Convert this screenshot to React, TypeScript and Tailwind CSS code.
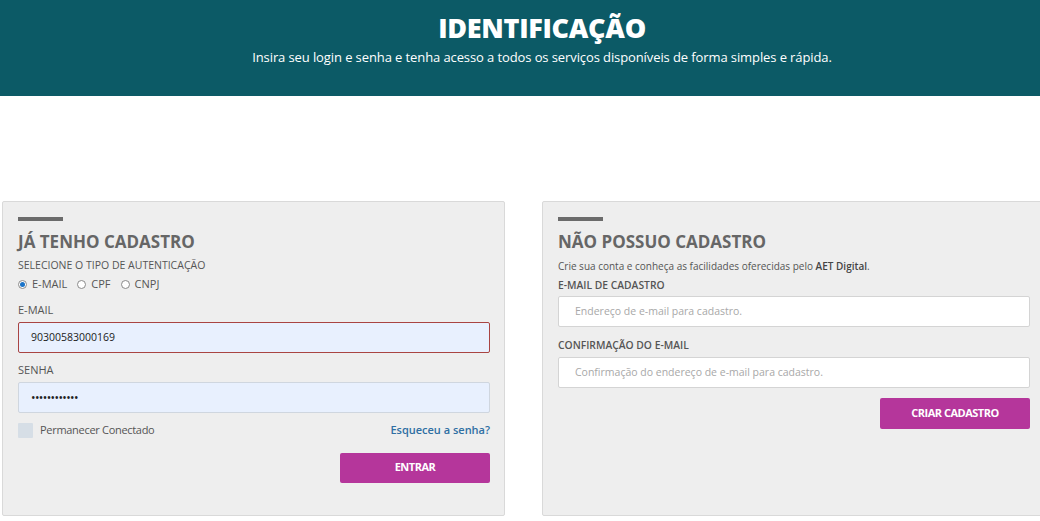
import React, { useState } from 'react'

const font = { fontFamily: '"Open Sans", "Liberation Sans", sans-serif' }

const SectionBar = () => <div className="w-[45px] h-[4px] bg-[#6b6b6b] mb-[11px]" />

const Radio: React.FC<{ label: string; checked?: boolean; onClick: () => void }> = ({ label, checked, onClick }) => (
  <label className="flex items-center gap-[5px] cursor-pointer" onClick={onClick}>
    <span className="w-[9px] h-[9px] rounded-full border border-[#8a8a8a] bg-white flex items-center justify-center">
      {checked && <span className="w-[5px] h-[5px] rounded-full bg-[#1a73c8]" />}
    </span>
    <span>{label}</span>
  </label>
)

export default function App() {
  const [authType, setAuthType] = useState<'email' | 'cpf' | 'cnpj'>('email')

  return (
    <div className="w-[1040px] h-[521px] overflow-hidden bg-white" style={font}>
      {/* Header */}
      <div className="h-[96px] bg-[#0c5a66] flex flex-col items-center pl-[44px] pt-[9px] text-white">
        <h1 className="text-[27px] leading-[38px] font-extrabold tracking-[-0.3px]">IDENTIFICAÇÃO</h1>
        <p className="text-[13px] leading-[18px] mt-[1px] tracking-[-0.1px]">
          Insira seu login e senha e tenha acesso a todos os serviços disponíveis de forma simples e rápida.
        </p>
      </div>

      <div className="flex gap-[37px] pl-[2px] pt-[105px]">
        {/* Login */}
        <div className="w-[503px] shrink-0 h-[315px] bg-[#eeeeee] border border-[#d9d9d9] rounded-[2px] pl-[15px] pr-[14px] pt-[15px] text-[#555]">
          <SectionBar />
          <h2 className="text-[17px] leading-[20px] font-bold text-[#666]">JÁ TENHO CADASTRO</h2>
          <div className="text-[10.5px] leading-[14px] mt-[6px] text-[#555]">SELECIONE O TIPO DE AUTENTICAÇÃO</div>
          <div className="flex items-center gap-[10px] text-[11px] leading-[14px] mt-[5px] text-[#555]">
            <Radio label="E-MAIL" checked={authType === 'email'} onClick={() => setAuthType('email')} />
            <Radio label="CPF" checked={authType === 'cpf'} onClick={() => setAuthType('cpf')} />
            <Radio label="CNPJ" checked={authType === 'cnpj'} onClick={() => setAuthType('cnpj')} />
          </div>
          <div className="text-[11px] leading-[14px] mt-[12px] text-[#555]">E-MAIL</div>
          <div className="mt-[5px] h-[31px] border border-[#a94442] rounded-[2px] bg-[#e8f0fe] flex items-center px-[12px] text-[10.5px] text-[#222]">
            90300583000169
          </div>
          <div className="text-[11px] leading-[14px] mt-[10px] text-[#555]">SENHA</div>
          <div className="mt-[5px] h-[31px] border border-[#cfd6df] rounded-[2px] bg-[#e8f0fe] flex items-center px-[12px] text-[12px] text-[#222] tracking-[-0.6px]">
            ••••••••••••
          </div>
          <div className="flex items-center justify-between mt-[9px]">
            <div className="flex items-center gap-[7px]">
              <span className="w-[15px] h-[15px] bg-[#d6dee6] rounded-[1px]" />
              <span className="text-[11px] tracking-[-0.3px] text-[#555]">Permanecer Conectado</span>
            </div>
            <a className="text-[11px] font-semibold text-[#2f6fa3]">Esqueceu a senha?</a>
          </div>
          <div className="flex justify-end mt-[14px]">
            <button className="w-[150px] h-[30px] bg-[#b5369b] rounded-[2px] text-white text-[11px] font-bold tracking-[-0.5px]">
              ENTRAR
            </button>
          </div>
        </div>

        {/* Cadastro */}
        <div className="w-[504px] shrink-0 h-[315px] bg-[#eeeeee] border border-[#d9d9d9] rounded-[2px] pl-[15px] pr-[15px] pt-[15px] text-[#555]">
          <SectionBar />
          <h2 className="text-[17px] leading-[20px] font-bold text-[#666]">NÃO POSSUO CADASTRO</h2>
          <p className="text-[10px] leading-[14px] mt-[7px] text-[#555]">
            Crie sua conta e conheça as facilidades oferecidas pelo <span className="font-semibold text-[#444]">AET Digital</span>.
          </p>
          <div className="text-[10.3px] leading-[14px] mt-[5px] font-semibold text-[#555]">E-MAIL DE CADASTRO</div>
          <div className="mt-[4px] h-[31px] border border-[#d4d4d4] rounded-[2px] bg-white flex items-center px-[16px] text-[10.5px] text-[#a8a8a8]">
            Endereço de e-mail para cadastro.
          </div>
          <div className="text-[10.3px] leading-[14px] mt-[11px] font-semibold text-[#555]">CONFIRMAÇÃO DO E-MAIL</div>
          <div className="mt-[5px] h-[31px] border border-[#d4d4d4] rounded-[2px] bg-white flex items-center px-[16px] text-[10.5px] text-[#a8a8a8]">
            Confirmação do endereço de e-mail para cadastro.
          </div>
          <div className="flex justify-end mt-[10px]">
            <button className="w-[150px] h-[31px] bg-[#b5369b] rounded-[2px] text-white text-[11px] font-bold tracking-[-0.5px]">
              CRIAR CADASTRO
            </button>
          </div>
        </div>
      </div>
    </div>
  )
}
